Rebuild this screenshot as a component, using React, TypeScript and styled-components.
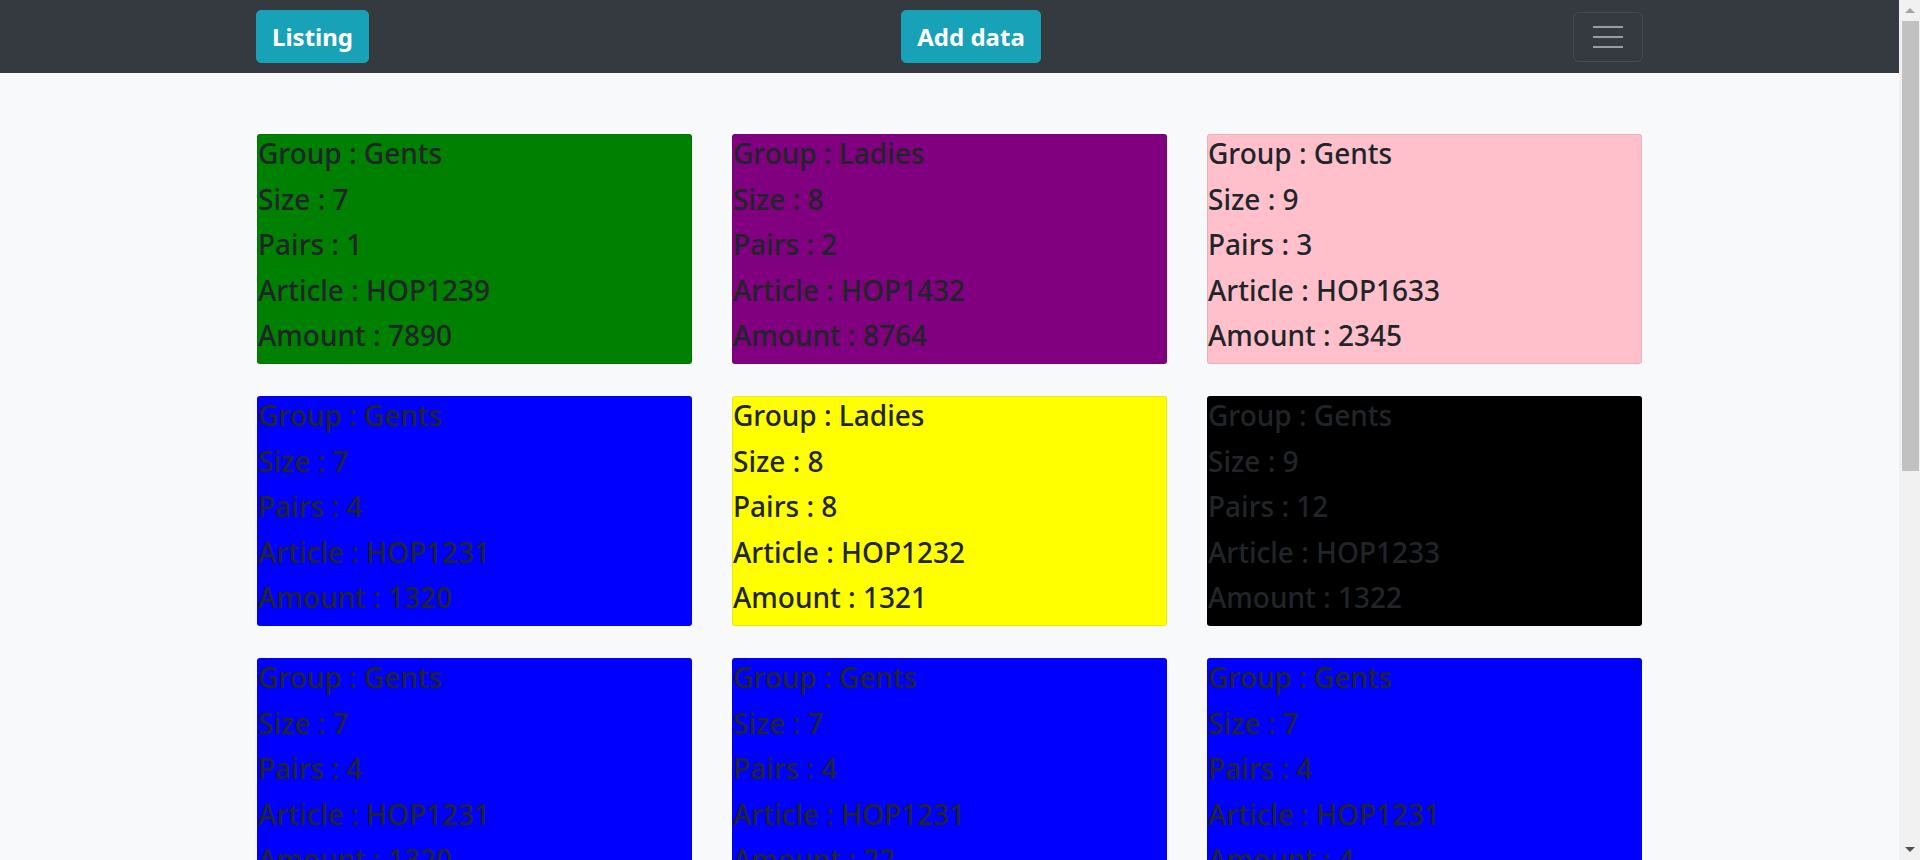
import React from 'react';
import styled, { createGlobalStyle } from 'styled-components';

type Item = {
  group: string;
  size: number;
  pairs: number;
  article: string;
  amount: number;
  color: string;
}

const items: Item[] = [
  { group: 'Gents', size: 7, pairs: 1, article: 'HOP1239', amount: 7890, color: 'green' },
  { group: 'Ladies', size: 8, pairs: 2, article: 'HOP1432', amount: 8764, color: 'purple' },
  { group: 'Gents', size: 9, pairs: 3, article: 'HOP1633', amount: 2345, color: 'pink' },
  { group: 'Gents', size: 7, pairs: 4, article: 'HOP1231', amount: 1320, color: 'blue' },
  { group: 'Ladies', size: 8, pairs: 8, article: 'HOP1232', amount: 1321, color: 'yellow' },
  { group: 'Gents', size: 9, pairs: 12, article: 'HOP1233', amount: 1322, color: 'black' },
  { group: 'Gents', size: 7, pairs: 4, article: 'HOP1231', amount: 1320, color: 'blue' },
  { group: 'Gents', size: 7, pairs: 4, article: 'HOP1231', amount: 22, color: 'blue' },
  { group: 'Gents', size: 7, pairs: 4, article: 'HOP1231', amount: 4, color: 'blue' },
];

export default function App() {
  return (
    <Shell>
      <GlobalStyle />
      <NavBar>
        <NavInner>
          <NavButton>Listing</NavButton>
          <NavButton>Add data</NavButton>
          <Toggler aria-label="menu">
            <TogglerLine />
            <TogglerLine />
            <TogglerLine />
          </Toggler>
        </NavInner>
      </NavBar>
      <Main>
        <CardGrid>
          {items.map((it, i) => (
            <ItemCard key={i} $bg={it.color}>
              <Line>Group : {it.group}</Line>
              <Line>Size : {it.size}</Line>
              <Line>Pairs : {it.pairs}</Line>
              <Line>Article : {it.article}</Line>
              <Line>Amount : {it.amount}</Line>
            </ItemCard>
          ))}
        </CardGrid>
      </Main>
      {/* fake page scrollbar, like the one in the screenshot */}
      <ScrollTrack>
        <Arrow $dir="up" />
        <Thumb />
        <TrackRest />
        <Arrow $dir="down" />
      </ScrollTrack>
    </Shell>
  );
}

const GlobalStyle = createGlobalStyle`
  * { box-sizing: border-box; }
  html, body { overflow-x: hidden; }
  body {
    margin: 0;
    background: #f8f9fa;
    color: #212529;
    font-family: "Noto Sans", "Open Sans", sans-serif;
  }
`

const Shell = styled.div`
  padding-right: 17px;
`

const NavBar = styled.nav`
  background: #343a40;
  height: 73px;
`

const NavInner = styled.div`
  width: 1391px;
  height: 100%;
  margin: 0 auto;
  display: flex;
  align-items: center;
  justify-content: space-between;
`

const NavButton = styled.button`
  background: #17a2b8;
  border: 1px solid #17a2b8;
  border-radius: 5px;
  color: #fff;
  font-family: "Noto Sans", sans-serif;
  font-weight: 700;
  font-size: 24px;
  line-height: 35px;
  padding: 8px 15px;
  height: 53px;
  margin-top: -1px;
`

const Toggler = styled.button`
  width: 70px;
  height: 50px;
  background: transparent;
  border: 1px solid rgba(255, 255, 255, 0.1);
  border-radius: 6px;
  display: flex;
  flex-direction: column;
  align-items: center;
  justify-content: center;
  gap: 8px;
  padding: 0;
  margin-right: 4px;
`

const TogglerLine = styled.span`
  display: block;
  width: 30px;
  height: 2px;
  background: rgba(255, 255, 255, 0.5);
`

const Main = styled.main`
  width: 1391px;
  margin: 0 auto;
  padding: 61px 0 40px 1px;
`

const CardGrid = styled.div`
  display: grid;
  grid-template-columns: repeat(3, 435px);
  column-gap: 40px;
  row-gap: 32px;
`

const ItemCard = styled.div<{ $bg: string }>`
  background: ${(p) => p.$bg};
  border: 1px solid rgba(0, 0, 0, 0.08);
  border-radius: 3px;
  height: 230px;
`

const Line = styled.h3`
  margin: 0 0 8px 0;
  font-size: 28px;
  font-weight: 500;
  line-height: 37.6px;
  color: #212529;
`

const ScrollTrack = styled.div`
  position: fixed;
  top: 0;
  right: 0;
  width: 21px;
  height: 100vh;
  background: #f1f1f1;
  display: flex;
  flex-direction: column;
  align-items: center;
`

const Arrow = styled.div<{ $dir: 'up' | 'down' }>`
  height: 21px;
  width: 17px;
  flex: none;
  display: flex;
  align-items: center;
  justify-content: center;
  &::before {
    content: '';
    border-left: 5px solid transparent;
    border-right: 5px solid transparent;
    ${(p) => p.$dir === 'up'
      ? 'border-bottom: 5px solid #a3a3a3;'
      : 'border-top: 5px solid #505050;'}
  }
`

const Thumb = styled.div`
  width: 17px;
  height: 450px;
  margin-left: 2px;
  background: #c1c1c1;
  flex: none;
`

const TrackRest = styled.div`
  flex: 1;
`
